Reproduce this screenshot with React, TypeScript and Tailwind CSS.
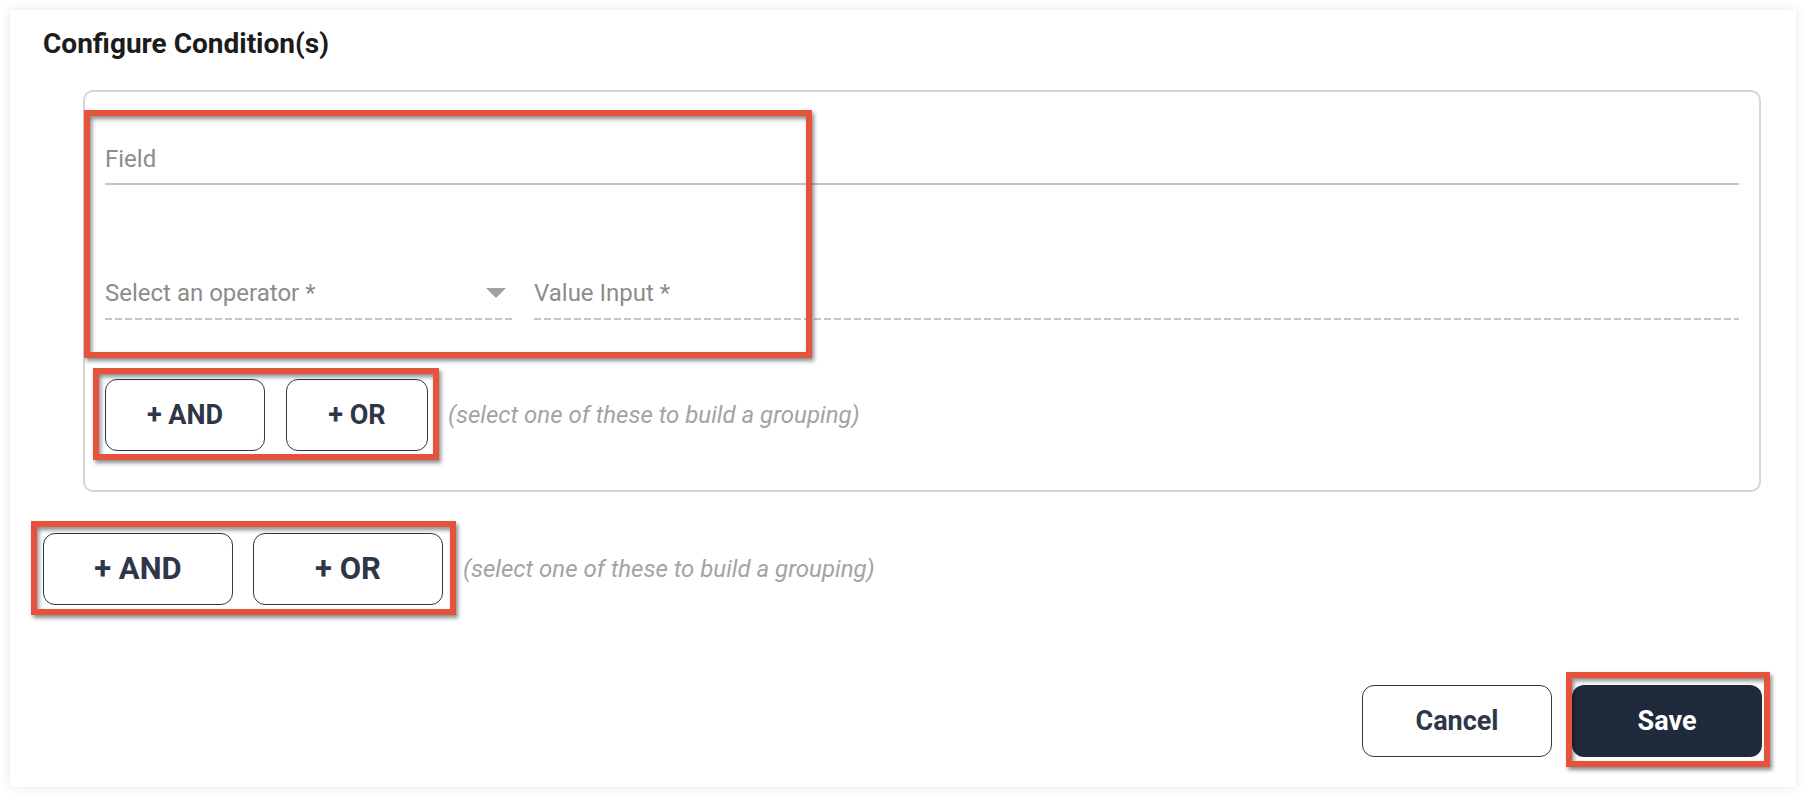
import React from "react"

const redBox =
  "pointer-events-none absolute border-[6px] border-[#e6533c] shadow-[2px_3px_4px_rgba(0,0,0,0.45),inset_2px_3px_4px_rgba(0,0,0,0.45)]"

const dashed =
  "h-[2px] bg-[repeating-linear-gradient(to_right,#c6c6c6_0_7px,transparent_7px_10px)]"

const GroupButton = ({ label, className }: { label: string; className: string }) => (
  <button
    className={`h-[72px] rounded-[12px] border border-[#2d3748] bg-white font-bold text-[#2d3748] ${className}`}
  >
    {label}
  </button>
)

const Hint = () => (
  <span className="text-[24px] italic text-[#a3a3a3]">(select one of these to build a grouping)</span>
)

export default function App() {
  return (
    <div className="min-h-screen bg-white p-[10px] [font-family:Roboto,sans-serif]">
      <div className="flex h-[777px] w-[1786px] flex-col bg-white pl-[33px] pr-[34px] pt-[17px] shadow-[0_0_10px_rgba(0,0,0,0.1)]">
        <h1 className="text-[28px] font-bold leading-[34px] text-[#1c1c1c]">Configure Condition(s)</h1>

        {/* Condition group */}
        <div className="relative ml-[40px] mr-[1px] mt-[29px] rounded-[10px] border-2 border-[#d6d6d6] px-[20px] pb-[39px] pt-[53px]">
          <div className="text-[24px] leading-[28px] text-[#8c8c8c]">Field</div>
          <div className="mt-[10px] h-[2px] bg-[#c4c4c4]" />

          <div className="mt-[94px] flex gap-[20px]">
            <div className="w-[409px]">
              <div className="flex items-center justify-between pr-[8px]">
                <span className="text-[24px] leading-[28px] text-[#8c8c8c]">Select an operator *</span>
                <svg width="20" height="10" viewBox="0 0 20 10">
                  <polygon points="0,0 20,0 10,10" fill="#a0a0a0" />
                </svg>
              </div>
              <div className={`mt-[11px] ${dashed}`} />
            </div>
            <div className="flex-1">
              <div className="text-[24px] leading-[28px] text-[#8c8c8c]">Value Input *</div>
              <div className={`mt-[11px] ${dashed}`} />
            </div>
          </div>

          <div className="mt-[59px] flex items-center gap-[20px]">
            <div className="relative flex gap-[21px]">
              <GroupButton label="+ AND" className="w-[160px] text-[27px]" />
              <GroupButton label="+ OR" className="w-[142px] text-[27px]" />
              <div className={`${redBox} -bottom-[9px] -left-[12px] -right-[11px] -top-[11px]`} />
            </div>
            <Hint />
          </div>

          <div className={`${redBox} -left-[1px] top-[18px] h-[248px] w-[728px]`} />
        </div>

        {/* Top level grouping */}
        <div className="mt-[41px] flex items-center gap-[20px]">
          <div className="relative flex gap-[20px]">
            <GroupButton label="+ AND" className="w-[190px] text-[31px]" />
            <GroupButton label="+ OR" className="w-[190px] text-[31px]" />
            <div className={`${redBox} -bottom-[10px] -left-[12px] -right-[13px] -top-[12px]`} />
          </div>
          <Hint />
        </div>

        {/* Footer */}
        <div className="mt-[80px] flex justify-end gap-[20px]">
          <button className="h-[72px] w-[190px] rounded-[12px] border border-[#2d3748] bg-white text-[27px] font-bold text-[#2d3748]">
            Cancel
          </button>
          <div className="relative">
            <button className="h-[72px] w-[190px] rounded-[12px] bg-[#1f2a3c] text-[27px] font-bold text-white">
              Save
            </button>
            <div className={`${redBox} -bottom-[10px] -left-[6px] -right-[8px] -top-[13px]`} />
          </div>
        </div>
      </div>
    </div>
  )
}
